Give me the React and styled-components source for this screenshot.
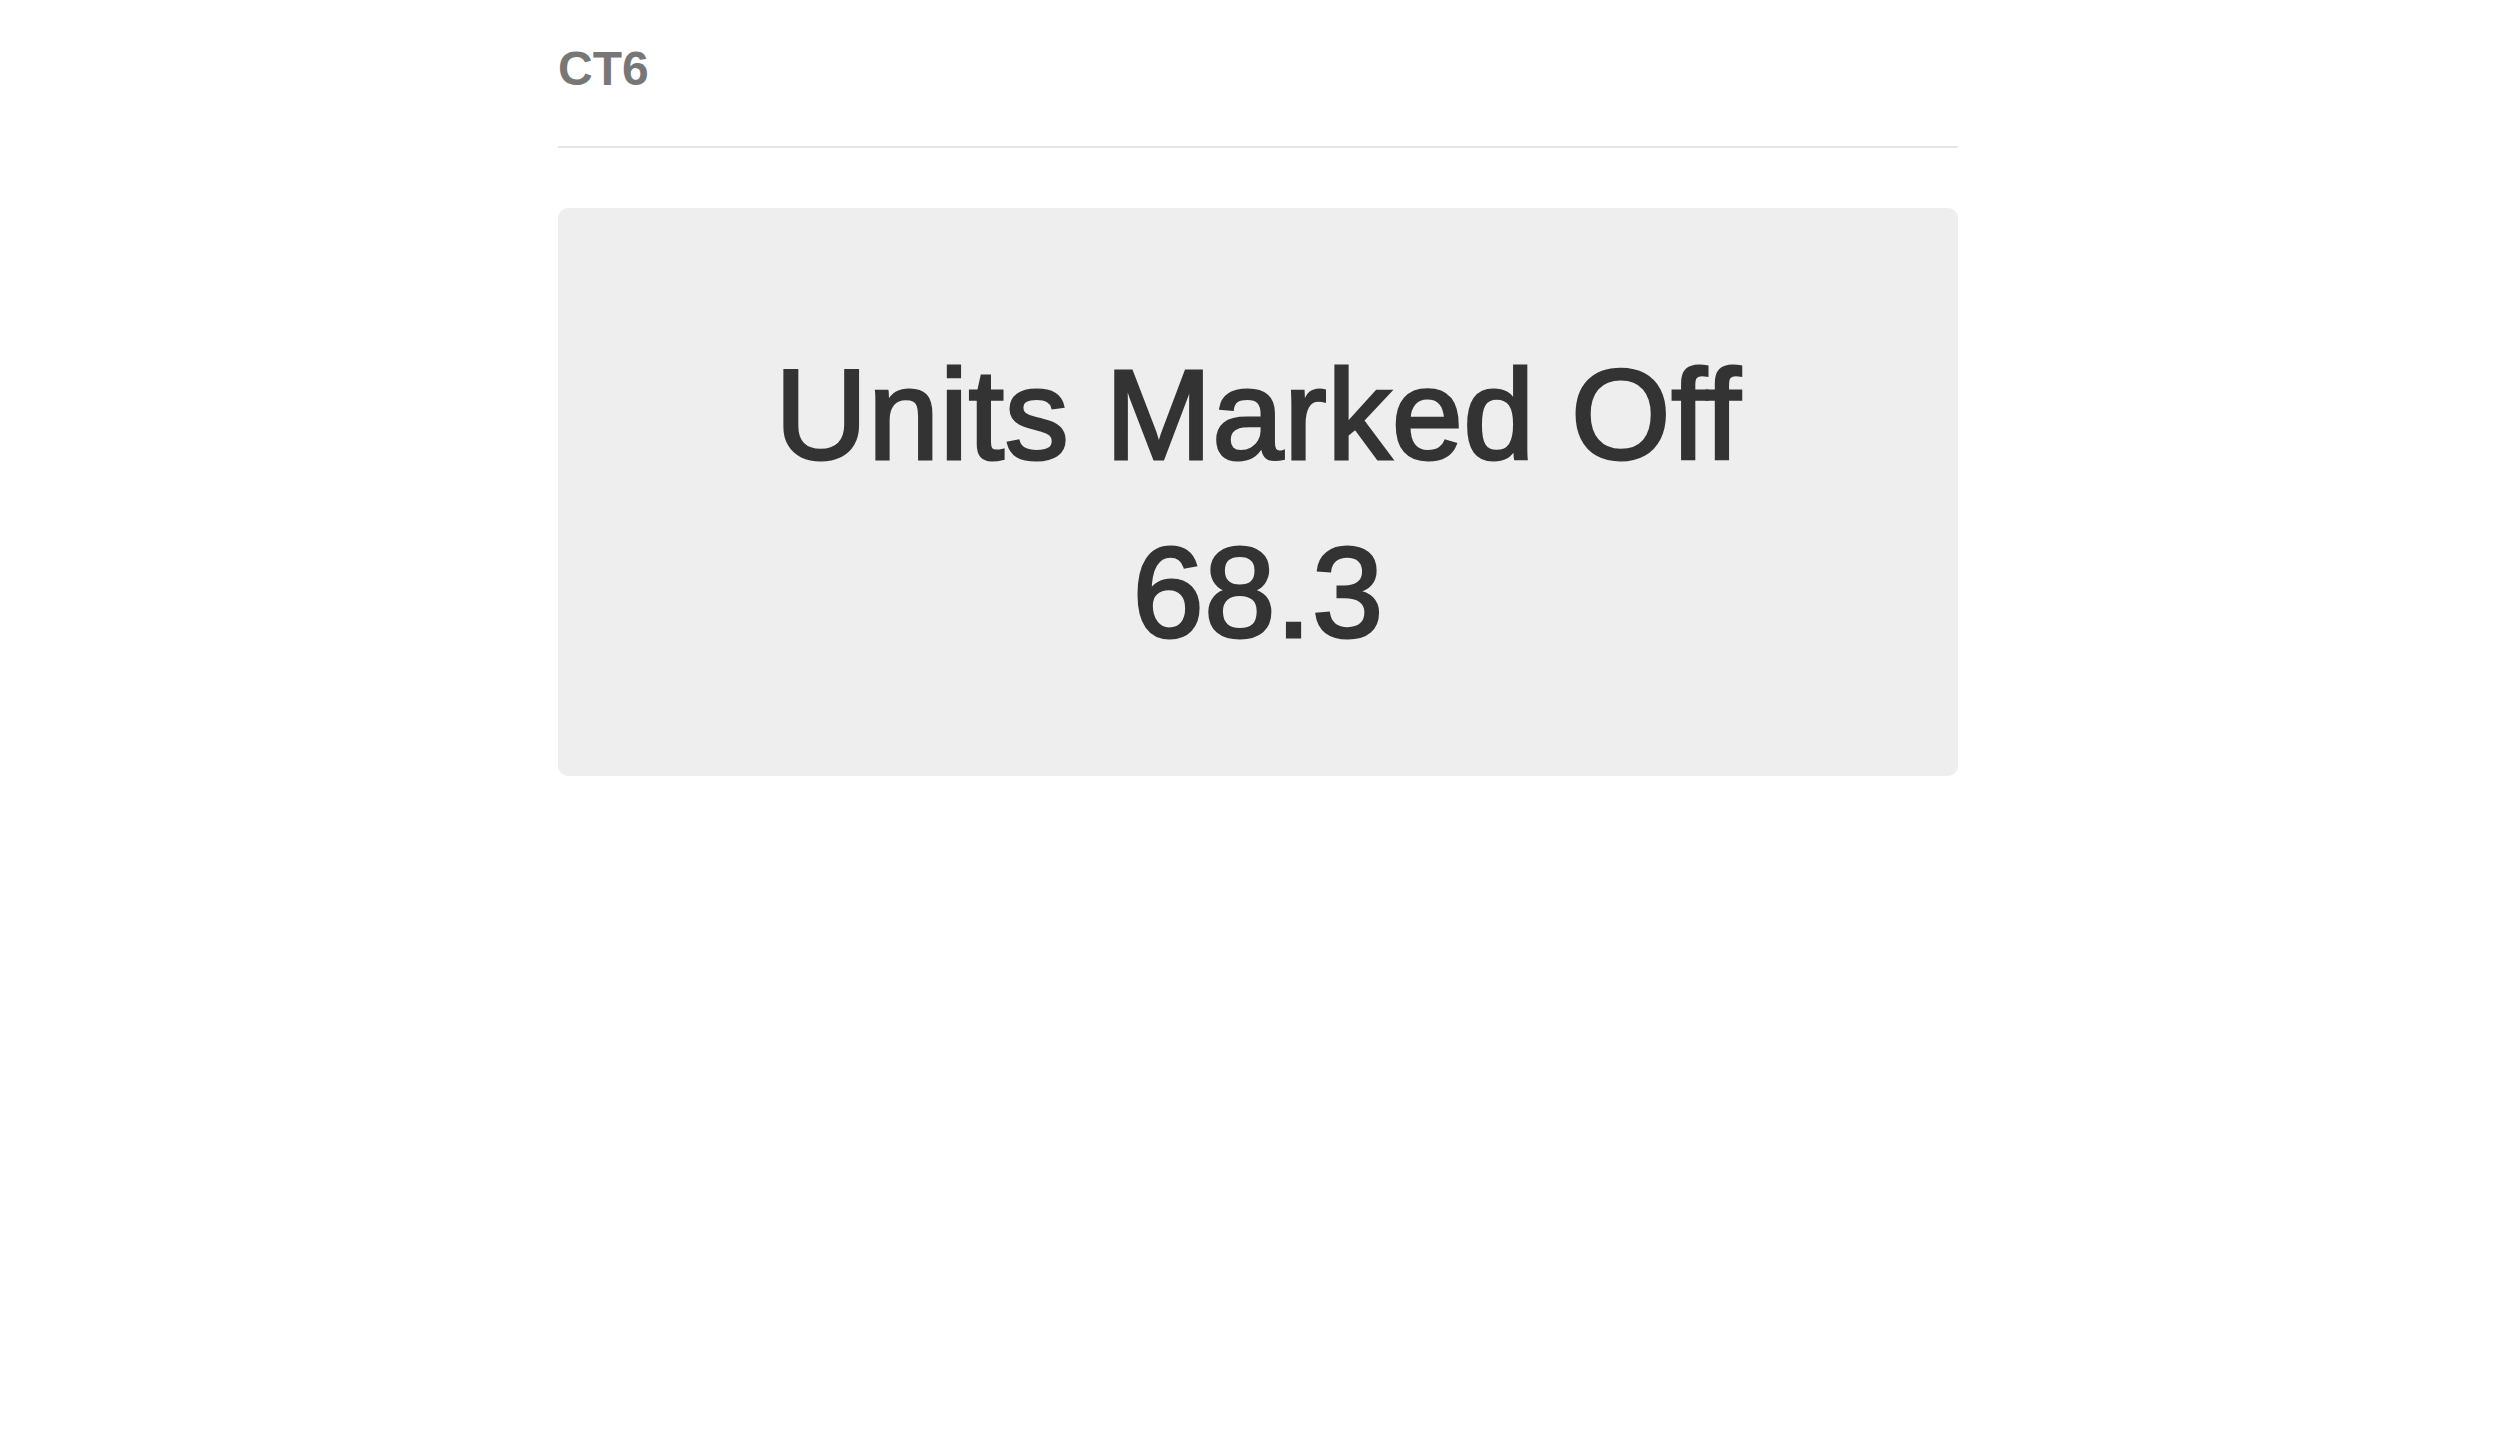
import React from 'react';
import styled, { createGlobalStyle } from 'styled-components';

const GlobalStyle = createGlobalStyle`
  html, body {
    margin: 0;
    padding: 0;
    background: #fff;
  }
  body {
    padding-left: 6px;
    font-family: 'Liberation Sans', Arial, Helvetica, sans-serif;
  }
`;

const Container = styled.div`
  width: 1400px;
  margin: 0 auto;
`;

const Header = styled.div`
  padding: 43px 0 50px;
  border-bottom: 2px solid #e5e5e5;
`;

const Title = styled.h3`
  margin: 0;
  font-size: 48px;
  line-height: 52.8px;
  font-weight: 700;
  color: #777;
`;

const Jumbotron = styled.div`
  margin-top: 60px;
  padding: 118px 0 94px;
  background: #eee;
  border-radius: 10px;
  text-align: center;
  color: #333;
`;

const Line = styled.div`
  font-size: 128px;
  line-height: 178px;
  font-weight: 400;
  letter-spacing: 0.5px;
  -webkit-text-stroke: 3px #333;
`;

const App = () => {
  return (
    <>
      <GlobalStyle />
      <Container>
        <Header>
          <Title>CT6</Title>
        </Header>
        <Jumbotron>
          <Line>Units Marked Off</Line>
          <Line>68.3</Line>
        </Jumbotron>
      </Container>
    </>
  );
};

export default App;
